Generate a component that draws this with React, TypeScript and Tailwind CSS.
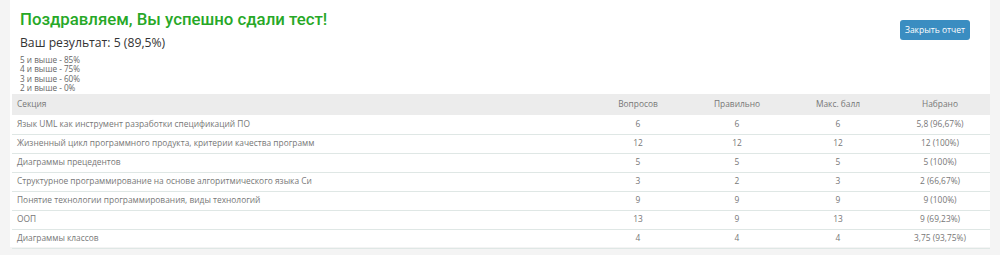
const rows = [
  { name: "Язык UML как инструмент разработки спецификаций ПО", total: 6, correct: 6, max: 6, score: "5,8 (96,67%)" },
  { name: "Жизненный цикл программного продукта, критерии качества программ", total: 12, correct: 12, max: 12, score: "12 (100%)" },
  { name: "Диаграммы прецедентов", total: 5, correct: 5, max: 5, score: "5 (100%)" },
  { name: "Структурное программирование на основе алгоритмического языка Си", total: 3, correct: 2, max: 3, score: "2 (66,67%)" },
  { name: "Понятие технологии программирования, виды технологий", total: 9, correct: 9, max: 9, score: "9 (100%)" },
  { name: "ООП", total: 13, correct: 9, max: 13, score: "9 (69,23%)" },
  { name: "Диаграммы классов", total: 4, correct: 4, max: 4, score: "3,75 (93,75%)" },
];

const grades = ["5 и выше - 85%", "4 и выше - 75%", "3 и выше - 60%", "2 и выше - 0%"];

export default function App() {
  return (
    <div className="h-[255px] w-[1000px] bg-[#f4f4f4] px-[10px] font-['Open_Sans',sans-serif]">
      <div className="h-[247px] bg-white px-[2px]">
        <div className="flex h-[94px] items-start justify-between pl-[8px] pr-[18px]">
          <div>
            <h1 className="pt-[7px] font-['Roboto',sans-serif] text-[16.8px] leading-[24px] font-medium text-[#27a827]">
              Поздравляем, Вы успешно сдали тест!
            </h1>
            <div className="mt-[4px] text-[12.2px] leading-[16px] text-[#333]">
              Ваш результат: 5 (89,5%)
            </div>
            <div className="mt-[4px] text-[8.2px] leading-[9.3px] text-[#666]">
              {grades.map((g) => (
                <div key={g}>{g}</div>
              ))}
            </div>
          </div>
          <button className="mt-[20px] h-[20px] rounded-[3px] bg-[#3a8dc1] px-[5px] text-[8.5px] leading-[20px] text-white">
            Закрыть отчет
          </button>
        </div>

        <table className="w-[978px] border-collapse text-[8.4px] text-[#777]">
          <thead>
            <tr className="h-[21px] bg-[#ececec]">
              <th className="w-[576px] pl-[5px] text-left font-normal">Секция</th>
              <th className="w-[100px] text-center font-normal">Вопросов</th>
              <th className="w-[98px] text-center font-normal">Правильно</th>
              <th className="w-[104px] text-center font-normal">Макс. балл</th>
              <th className="w-[100px] text-center font-normal">Набрано</th>
            </tr>
          </thead>
          <tbody>
            {rows.map((r) => (
              <tr key={r.name} className="h-[19px] border-b border-[#dfe7e5]">
                <td className="pl-[5px] text-left">{r.name}</td>
                <td className="text-center">{r.total}</td>
                <td className="text-center">{r.correct}</td>
                <td className="text-center">{r.max}</td>
                <td className="text-center">{r.score}</td>
              </tr>
            ))}
          </tbody>
        </table>
      </div>
    </div>
  );
}
